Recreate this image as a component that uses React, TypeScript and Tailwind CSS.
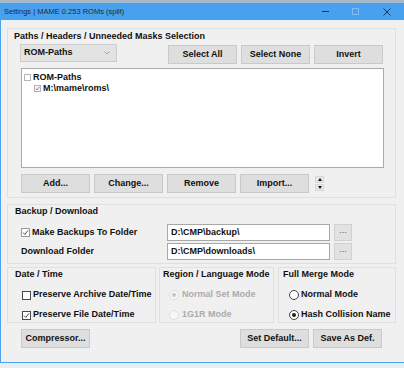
import type { ReactNode } from "react";

const font = { fontFamily: '"Liberation Sans", Arial, sans-serif' };

function Btn({ children, className = "" }: { children: ReactNode; className?: string }) {
  return (
    <div
      className={`flex h-[19px] w-[69px] items-center justify-center border border-[#c9c9c9] bg-[#dedede] text-[9px] font-bold text-[#111] ${className}`}
    >
      {children}
    </div>
  );
}

function Check({ checked, faint = false }: { checked: boolean; faint?: boolean }) {
  return (
    <div
      className={`flex h-[9px] w-[9px] shrink-0 items-center justify-center border bg-white ${
        faint ? "border-[#9a9a9a]" : "border-[#4a4a4a]"
      }`}
    >
      {checked && (
        <svg width="7" height="7" viewBox="0 0 7 7">
          <path d="M1 3.6 L2.8 5.4 L6 1.4" fill="none" stroke="#333" strokeWidth="0.9" />
        </svg>
      )}
    </div>
  );
}

function Radio({ checked, disabled = false }: { checked: boolean; disabled?: boolean }) {
  return (
    <div
      className={`flex h-[10px] w-[10px] shrink-0 items-center justify-center rounded-full border ${
        disabled ? "border-[#dedede] bg-[#f7f7f7]" : "border-[#444] bg-white"
      }`}
    >
      {checked && (
        <div className={`h-[4px] w-[4px] rounded-full ${disabled ? "bg-[#c4c4c4]" : "bg-[#222]"}`} />
      )}
    </div>
  );
}

function Group({ children, className = "" }: { children: ReactNode; className?: string }) {
  return <div className={`border border-[#e0e0e0] ${className}`}>{children}</div>;
}

export default function App() {
  return (
    <div className="flex h-[368px] w-[404px] flex-col overflow-hidden bg-[#e8eef4]" style={font}>
      <div className="h-[3px] bg-[#a6b9cb]" />
      <div className="flex h-[360px] flex-col border-b border-l border-[#4da2ee]">
        <div className="flex h-[17px] items-center bg-[#48a1ef] pl-[3px]">
          <span className="text-[7.5px] text-[#1d2a38]">Settings | MAME 0.253 ROMs (split)</span>
          <div className="ml-auto flex items-center">
            <svg width="8" height="2" viewBox="0 0 8 2" className="mr-[22px]">
              <rect width="7" height="1" fill="#1e3550" />
            </svg>
            <svg width="7" height="7" viewBox="0 0 7 7" className="mr-[24px]">
              <rect x="0.5" y="0.5" width="6" height="6" fill="none" stroke="#7dbdf3" />
            </svg>
            <svg width="8" height="8" viewBox="0 0 8 8" className="mr-[13px]">
              <path d="M0.5 0.5 L7.5 7.5 M7.5 0.5 L0.5 7.5" stroke="#1e3550" strokeWidth="1" />
            </svg>
          </div>
        </div>

        <div className="flex-1 bg-[#f0f0f0] pl-[6px] pt-[8px] text-[9px] font-bold text-[#111]">
          {/* Paths / Headers */}
          <Group className="w-[389px] pb-[4px] pl-[12px]">
            <div className="mt-[2px] flex h-[12px] items-center">
              <span className="-ml-[6px]">Paths / Headers / Unneeded Masks Selection</span>
            </div>
            <div className="mt-px flex h-[20px] items-start">
              <div className="flex h-[18px] w-[97px] items-center border border-[#cdcdcd] bg-[#e3e3e3] pl-[3px]">
                <span>ROM-Paths</span>
                <svg width="6" height="4" viewBox="0 0 6 4" className="ml-auto mr-[6px]">
                  <path d="M0.5 0.5 L3 3 L5.5 0.5" fill="none" stroke="#9a9a9a" strokeWidth="0.9" />
                </svg>
              </div>
              <div className="ml-[51px] mt-px flex gap-[4px]">
                <Btn>Select All</Btn>
                <Btn>Select None</Btn>
                <Btn>Invert</Btn>
              </div>
            </div>
            <div className="ml-px mt-[4px] h-[100px] w-[363px] border border-[#ababab] bg-white pl-[2px] pt-[3px]">
              <div className="flex h-[11px] items-center gap-[2px]">
                <div className="h-[7px] w-[7px] border border-[#b5b5b5] bg-white" />
                <span>ROM-Paths</span>
              </div>
              <div className="flex h-[11px] items-center gap-[2px] pl-[10px]">
                <div className="flex h-[7px] w-[7px] items-center justify-center border border-[#b5b5b5] bg-[#f4f4f4]">
                  <svg width="5" height="5" viewBox="0 0 5 5">
                    <path d="M0.6 2.6 L2 4 L4.4 0.8" fill="none" stroke="#777" strokeWidth="0.8" />
                  </svg>
                </div>
                <span>M:\mame\roms\</span>
              </div>
            </div>
            <div className="ml-px mt-[6px] flex items-center gap-[4px]">
              <Btn>Add...</Btn>
              <Btn>Change...</Btn>
              <Btn>Remove</Btn>
              <Btn>Import...</Btn>
              <div className="ml-[2px] flex flex-col gap-[1px]">
                <div className="flex h-[7px] w-[9px] items-center justify-center border border-[#d8d8d8] bg-[#e6e6e6]">
                  <svg width="4" height="3" viewBox="0 0 4 3">
                    <path d="M0 3 L2 0 L4 3 Z" fill="#111" />
                  </svg>
                </div>
                <div className="flex h-[7px] w-[9px] items-center justify-center border border-[#d8d8d8] bg-[#e6e6e6]">
                  <svg width="4" height="3" viewBox="0 0 4 3">
                    <path d="M0 0 L4 0 L2 3 Z" fill="#111" />
                  </svg>
                </div>
              </div>
            </div>
          </Group>

          {/* Backup / Download */}
          <Group className="mt-[6px] w-[389px] pb-[3px] pl-[13px]">
            <div className="mt-[1px] flex h-[12px] items-center">
              <span className="-ml-[6px]">Backup / Download</span>
            </div>
            <div className="mt-[6px] flex h-[17px] items-center">
              <div className="flex w-[146px] items-center gap-[2px]">
                <Check checked faint />
                <span>Make Backups To Folder</span>
              </div>
              <div className="flex h-[17px] w-[163px] items-center border border-[#a8a8a8] bg-white pl-[3px]">
                D:\CMP\backup\
              </div>
              <div className="ml-[4px] flex h-[17px] w-[18px] items-center justify-center border border-[#d0d0d0] bg-[#e2e2e2] pb-[3px] font-normal text-[#555]">
                ...
              </div>
            </div>
            <div className="mt-[2px] flex h-[17px] items-center">
              <div className="w-[146px]">Download Folder</div>
              <div className="flex h-[17px] w-[163px] items-center border border-[#a8a8a8] bg-white pl-[3px]">
                D:\CMP\downloads\
              </div>
              <div className="ml-[4px] flex h-[17px] w-[18px] items-center justify-center border border-[#d0d0d0] bg-[#e2e2e2] pb-[3px] font-normal text-[#555]">
                ...
              </div>
            </div>
          </Group>

          {/* Date / Region / Merge */}
          <div className="mt-[3px] flex">
            <Group className="w-[149px] pl-[7px]">
              <div className="mt-px flex h-[12px] items-center">Date / Time</div>
              <div className="mt-[7px] flex h-[14px] items-center gap-[2px] pl-[7px]">
                <Check checked={false} />
                <span>Preserve Archive Date/Time</span>
              </div>
              <div className="mt-[6px] flex h-[14px] items-center gap-[2px] pl-[7px]">
                <Check checked />
                <span>Preserve File Date/Time</span>
              </div>
            </Group>
            <Group className="ml-[3px] w-[115px] pl-[3px]">
              <div className="mt-px flex h-[12px] items-center">Region / Language Mode</div>
              <div className="mt-[7px] flex h-[14px] items-center gap-[3px] pl-[6px] text-[#acacac]">
                <Radio checked disabled />
                <span>Normal Set Mode</span>
              </div>
              <div className="mt-[6px] flex h-[14px] items-center gap-[3px] pl-[6px] text-[#acacac]">
                <Radio checked={false} disabled />
                <span>1G1R Mode</span>
              </div>
            </Group>
            <Group className="ml-[4px] w-[118px] pl-[4px]">
              <div className="mt-px flex h-[12px] items-center">Full Merge Mode</div>
              <div className="mt-[7px] flex h-[14px] items-center gap-[2px] pl-[6px]">
                <Radio checked={false} />
                <span>Normal Mode</span>
              </div>
              <div className="mt-[6px] flex h-[14px] items-center gap-[2px] pl-[6px]">
                <Radio checked />
                <span>Hash Collision Name</span>
              </div>
            </Group>
          </div>

          <div className="mt-[6px] flex pl-[14px]">
            <Btn>Compressor...</Btn>
            <Btn className="ml-[150px]">Set Default...</Btn>
            <Btn className="ml-[4px]">Save As Def.</Btn>
          </div>
        </div>
      </div>
    </div>
  );
}
